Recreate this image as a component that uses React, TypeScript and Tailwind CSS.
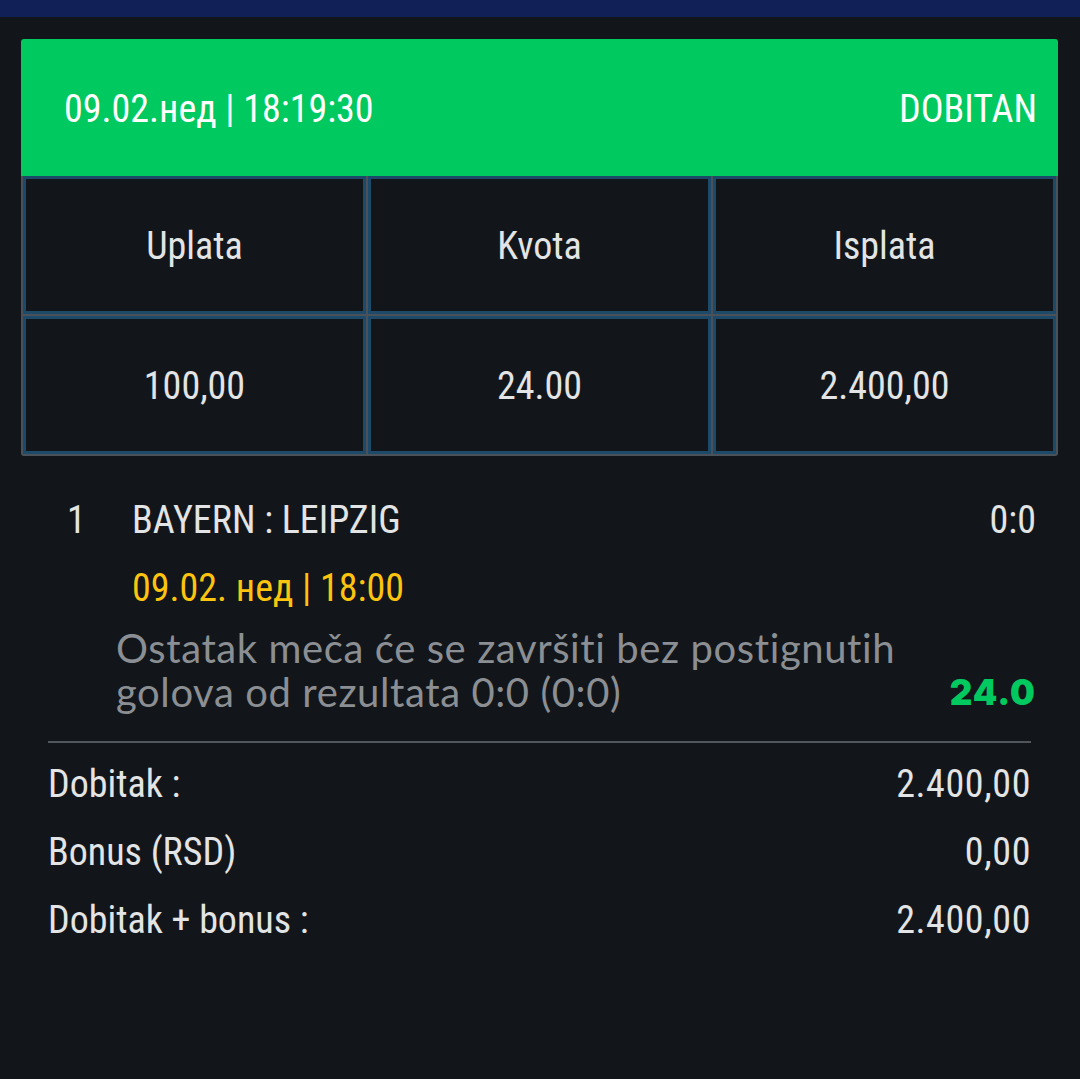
import React from 'react';

const cond = "font-['Roboto',sans-serif] font-stretch-condensed";

const heads = ['Uplata', 'Kvota', 'Isplata'];
const vals = ['100,00', '24.00', '2.400,00'];

const summary = [
  { label: 'Dobitak :', value: '2.400,00' },
  { label: 'Bonus (RSD)', value: '0,00' },
  { label: 'Dobitak + bonus :', value: '2.400,00' },
];

const Cell: React.FC<{ text: string }> = ({ text }) => (
  <div className="h-[138px] pt-[3px] border-[3px] border-[#1c4a68] bg-[#12161a] flex items-center justify-center">
    <span className={`${cond} text-[38px] text-[#e3e4e5]`}>{text}</span>
  </div>
);

export default function App() {
  return (
    <div className="min-h-[1079px] bg-[#12161a] pb-10">
      <div className="h-[17px] bg-[#122058]" />

      {/* ticket card */}
      <div className="mt-[22px] ml-[21px] mr-[22px]">
        <header className={`${cond} h-[137px] pt-[3px] bg-[#00c95f] rounded-t-[3px] flex items-center justify-between pl-[43px] pr-[21px] text-[38px] text-white`}>
          <span>09.02.нед | 18:19:30</span>
          <span>DOBITAN</span>
        </header>
        <div className="bg-[#4b5158] px-[2px] pb-[2px] rounded-b-[3px] grid grid-cols-3 gap-[2px]">
          {heads.map((h) => <Cell key={h} text={h} />)}
          {vals.map((v) => <Cell key={v} text={v} />)}
        </div>
      </div>

      {/* match */}
      <div className="pl-[67px] pr-[44px] pt-[42px]">
        <div className={`${cond} flex items-center h-[44px] text-[38px] text-[#e3e4e5]`}>
          <span className="w-[65px]">1</span>
          <span className="flex-1">BAYERN : LEIPZIG</span>
          <span>0:0</span>
        </div>
        <div className={`${cond} mt-[24px] ml-[65px] h-[44px] flex items-center text-[38px] text-[#fcc40e]`}>
          09.02. нед | 18:00
        </div>
        <div className="mt-[16px] ml-[49px] flex items-end justify-between">
          <p className="font-['Lato',sans-serif] text-[40px] leading-[44px] tracking-[0.6px] text-[#8b8f93]">
            Ostatak meča će se završiti bez postignutih
            <br />
            golova od rezultata 0:0 (0:0)
          </p>
          <span className="font-['Inter',sans-serif] font-black text-[35px] leading-[44px] tracking-[1px] text-[#00c95f]">24.0</span>
        </div>
      </div>

      {/* totals */}
      <div className="mt-[27px] ml-[48px] mr-[49px]">
        <div className="h-[2px] bg-[#51565c]" />
        <div className="mt-[7px]">
          {summary.map((r) => (
            <div key={r.label} className={`${cond} h-[68px] flex items-center justify-between text-[38px] text-[#e3e4e5]`}>
              <span>{r.label}</span>
              <span className="tracking-[0.6px]">{r.value}</span>
            </div>
          ))}
        </div>
      </div>
    </div>
  );
}
